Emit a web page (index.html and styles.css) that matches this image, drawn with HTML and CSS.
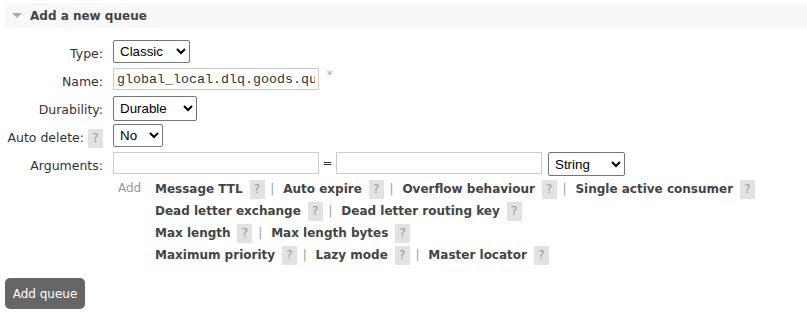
FILE: index.html
```html
<!DOCTYPE html>
<html lang="en">
<head>
    <meta charset="UTF-8">
    <title>Add a new queue</title>
    <link rel="stylesheet" href="styles.css">
</head>
<body>
    <div class="section">
        <h2 class="section-title"><span class="arrow"></span>Add a new queue</h2>

        <form class="section-body">
            <table class="form">
                <tr>
                    <th><label for="type">Type:</label></th>
                    <td>
                        <select id="type" class="sel-type">
                            <option>Classic</option>
                            <option>Quorum</option>
                        </select>
                    </td>
                </tr>
                <tr>
                    <th><label for="name">Name:</label></th>
                    <td>
                        <input type="text" id="name" class="txt" value="global_local.dlq.goods.queue">
                        <span class="mand">*</span>
                    </td>
                </tr>
                <tr>
                    <th><label for="durable">Durability:</label></th>
                    <td>
                        <select id="durable" class="sel-durable">
                            <option>Durable</option>
                            <option>Transient</option>
                        </select>
                    </td>
                </tr>
                <tr>
                    <th><label for="autodelete">Auto delete: <span class="help">?</span></label></th>
                    <td>
                        <select id="autodelete" class="sel-no">
                            <option>No</option>
                            <option>Yes</option>
                        </select>
                    </td>
                </tr>
                <tr>
                    <th><label>Arguments:</label></th>
                    <td>
                        <div class="arg-row">
                            <input type="text" class="txt">
                            <span class="eq">=</span>
                            <input type="text" class="txt">
                            <select class="sel-string">
                                <option>String</option>
                                <option>Number</option>
                                <option>Boolean</option>
                                <option>List</option>
                            </select>
                        </div>
                        <div class="arg-add">
                            <span class="add">Add</span>
                            <div class="arg-links">
                                <div>
                                    <span class="arg">Message TTL</span> <span class="help">?</span> <span class="sep">|</span>
                                    <span class="arg">Auto expire</span> <span class="help">?</span> <span class="sep">|</span>
                                    <span class="arg">Overflow behaviour</span> <span class="help">?</span> <span class="sep">|</span>
                                    <span class="arg">Single active consumer</span> <span class="help">?</span>
                                </div>
                                <div>
                                    <span class="arg">Dead letter exchange</span> <span class="help">?</span> <span class="sep">|</span>
                                    <span class="arg">Dead letter routing key</span> <span class="help">?</span>
                                </div>
                                <div>
                                    <span class="arg">Max length</span> <span class="help">?</span> <span class="sep">|</span>
                                    <span class="arg">Max length bytes</span> <span class="help">?</span>
                                </div>
                                <div>
                                    <span class="arg">Maximum priority</span> <span class="help">?</span> <span class="sep">|</span>
                                    <span class="arg">Lazy mode</span> <span class="help">?</span> <span class="sep">|</span>
                                    <span class="arg">Master locator</span> <span class="help">?</span>
                                </div>
                            </div>
                        </div>
                    </td>
                </tr>
            </table>

            <input type="submit" class="button" value="Add queue">
        </form>
    </div>
</body>
</html>
```

FILE: styles.css
```css
body {
    font-family: "DejaVu Sans", Verdana, sans-serif;
    font-size: 12px;
    color: #333;
    margin: 3px 0 0 5px;
}
.section-title {
    display: flex;
    align-items: center;
    height: 25px;
    margin: 0;
    padding-left: 7px;
    background-color: #f8f8f8;
    color: #444;
    font-size: 12px;
    font-weight: bold;
}
.arrow {
    width: 0;
    height: 0;
    border-left: 5px solid transparent;
    border-right: 5px solid transparent;
    border-top: 5px solid #aaa;
    margin-right: 8px;
}
.section-body {
    padding-top: 12px;
}
.form {
    border-collapse: collapse;
}
.form th {
    width: 98px;
    padding: 0 10px 0 0;
    text-align: right;
    vertical-align: top;
    font-size: 12.5px;
    font-weight: normal;
    white-space: nowrap;
    line-height: 28px;
    height: 28px;
}
.form td {
    padding: 0;
    vertical-align: top;
    height: 28px;
}
select {
    font-family: "Liberation Sans", Arial, sans-serif;
    font-size: 13.33px;
    height: 23px;
    padding: 0 2px;
    border: 1px solid #767676;
    border-radius: 2px;
    background-color: #fff;
    color: #000;
}
.sel-type { width: 77px; }
.sel-durable { width: 84px; height: 25px; }
.sel-no { width: 50px; }
.sel-string { width: 77px; height: 24px; margin-left: 6px; }
.txt {
    width: 206px;
    height: 22px;
    box-sizing: border-box;
    padding: 0 3px;
    border: 1px solid #ccc;
    font-family: "Liberation Mono", "Courier New", monospace;
    font-size: 13.33px;
    color: #333;
}
.mand {
    color: #f88;
    margin-left: 4px;
    vertical-align: top;
}
.help {
    display: inline-block;
    width: 15px;
    height: 19px;
    line-height: 19px;
    text-align: center;
    background-color: #e2e2e2;
    color: #999;
    font-size: 12px;
    font-weight: normal;
    vertical-align: middle;
}
.arg-row {
    display: flex;
    align-items: flex-start;
}
.eq {
    width: 17px;
    text-align: center;
    line-height: 22px;
}
.arg-add {
    display: flex;
    padding-top: 3px;
}
.add {
    width: 37px;
    padding-left: 5px;
    color: #999;
    line-height: 18px;
}
.arg-links {
    line-height: 22px;
    margin-top: -1px;
}
.arg {
    font-weight: bold;
    color: #444;
    margin-right: 3px;
}
.sep {
    color: #999;
    margin: 0 5px 0 2px;
}
.button {
    margin-top: 12px;
    width: 80px;
    height: 31px;
    border: none;
    border-radius: 5px;
    background-color: #666;
    color: #fff;
    font-family: "DejaVu Sans", Verdana, sans-serif;
    font-size: 12px;
    cursor: pointer;
}
```
